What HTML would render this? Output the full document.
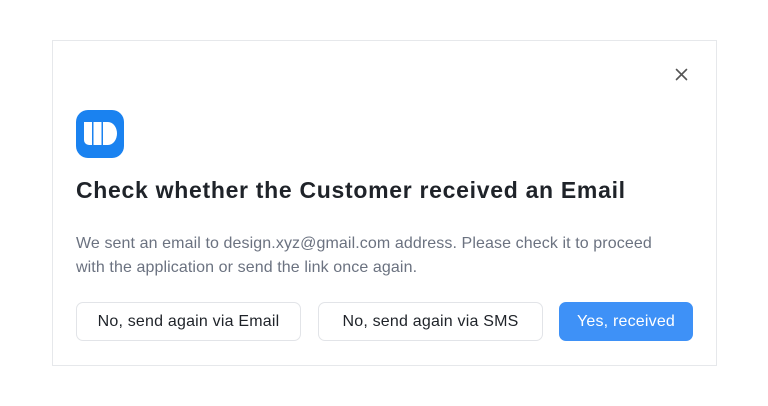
<!DOCTYPE html>
<html><head><style>
body{margin:0;width:768px;height:406px;background:#fff;font-family:"Liberation Sans",sans-serif;position:relative;overflow:hidden}
.card{position:absolute;left:52px;top:40px;width:663px;height:324px;border:1px solid #e6e8eb;box-sizing:content-box}
.t{position:absolute;left:76px;top:177px;font-size:23px;font-weight:bold;color:#1f2329;white-space:nowrap;letter-spacing:0.7px}
.p{position:absolute;left:76px;top:232px;font-size:16px;line-height:24px;color:#6b7280;width:605px;letter-spacing:0.1px}
.b{position:absolute;top:302px;height:39px;box-sizing:border-box;border:1px solid #e2e4e8;border-radius:7px;font-size:16px;color:#1f2329;display:flex;align-items:center;justify-content:center;background:#fff;letter-spacing:0.2px}
</style></head><body>
<div class="card"></div>
<svg style="position:absolute;left:674px;top:67px" width="15" height="15" viewBox="0 0 15 15"><path d="M2.5 2.5L12.5 12.5M12.5 2.5L2.5 12.5" stroke="#555" stroke-width="1.6" stroke-linecap="round"/></svg>
<svg style="position:absolute;left:76px;top:110px" width="48" height="48" viewBox="0 0 48 48">
<rect width="48" height="48" rx="12" fill="#1a82f0"/>
<path d="M8 12h8v23h-3a5 5 0 0 1-5-5z" fill="#fff"/>
<rect x="17.5" y="12" width="8" height="23" fill="#fff"/>
<path d="M27 12h5a9 11.5 0 0 1 9 11.5a9 11.5 0 0 1-9 11.5h-5z" fill="#fff"/>
</svg>
<div class="t">Check whether the Customer received an Email</div>
<div class="p">We sent an email to design.xyz@gmail.com address. Please check it to proceed with the application or send the link once again.</div>
<div class="b" style="left:76px;width:225px">No, send again via Email</div>
<div class="b" style="left:318px;width:225px">No, send again via SMS</div>
<div class="b" style="left:559px;width:134px;background:#3e91f7;border-color:#3e91f7;color:#fff">Yes, received</div>
</body></html>
